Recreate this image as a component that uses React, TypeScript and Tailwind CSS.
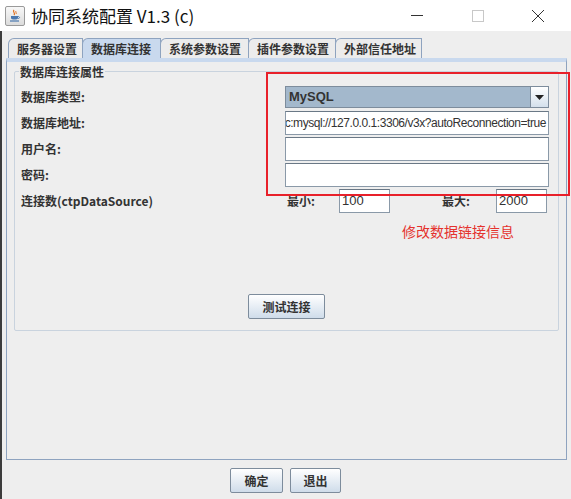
const font = "font-['Noto_Sans_CJK_SC','Noto_Sans',sans-serif]";

const tabs = [
  { label: "服务器设置", w: "w-[75px]" },
  { label: "数据库连接", w: "w-[79px]", active: true },
  { label: "系统参数设置", w: "w-[89px]" },
  { label: "插件参数设置", w: "w-[88px]" },
  { label: "外部信任地址", w: "w-[87px]" },
];

const JavaIcon = () => (
  <div className="flex h-[20px] w-[20px] items-center justify-center rounded-[2px] border border-[#9a9a9a] bg-gradient-to-b from-[#f8f8f8] to-[#dcdcdc]">
    <svg width="14" height="14" viewBox="0 0 14 14">
      <path d="M6 1 C4 3 8 4 6 6" stroke="#e07020" strokeWidth="1.2" fill="none" />
      <path d="M8 2 C7 3 9 4 8 5" stroke="#e07020" strokeWidth="1" fill="none" />
      <path d="M3 7 H10 V9 C10 11 3 11 3 9 Z" fill="#4a78b0" />
      <path d="M10 7.5 C12 7.5 12 9.5 10 9.5" stroke="#4a78b0" strokeWidth="1" fill="none" />
      <path d="M2 12 H11" stroke="#4a78b0" strokeWidth="1.2" />
    </svg>
  </div>
);

const Button = ({ label, w }: { label: string; w: string }) => (
  <button
    className={`${w} flex h-[25px] items-center justify-center rounded-[2px] border border-[#7d8c9c] bg-gradient-to-b from-[#ffffff] to-[#cfdcea] text-[12px] font-bold text-[#333]`}
  >
    {label}
  </button>
);

const Input = ({ value, w = "w-[264px]", end }: { value?: string; w?: string; end?: boolean }) => (
  <div
    className={`${w} flex h-[24px] items-center overflow-hidden whitespace-nowrap border border-[#8a99a8] border-t-[#6a7886] bg-white px-[2px] font-['Liberation_Sans',sans-serif] text-[#333] ${
      end ? "justify-end text-[12px] tracking-[-0.45px]" : "text-[13px]"
    }`}
  >
    {value}
  </div>
);

const Label = ({ children }: { children: React.ReactNode }) => (
  <div className="w-[264px] shrink-0 text-[12px] font-bold text-[#333]">{children}</div>
);

export default function App() {
  return (
    <div className={`relative h-[499px] w-[571px] overflow-hidden bg-[#eeeeee] ${font}`}>
      {/* title bar */}
      <div className="flex h-[31px] items-center bg-white pl-[5px]">
        <JavaIcon />
        <div className="ml-[6px] text-[17px] text-[#111]">协同系统配置 V1.3 (c)</div>
        <div className="ml-auto flex items-center">
          <div className="flex w-[60px] justify-center">
            <div className="h-[1px] w-[12px] bg-[#333]" />
          </div>
          <div className="flex w-[62px] justify-center">
            <div className="h-[12px] w-[12px] border border-[#c8c8c8]" />
          </div>
          <div className="flex w-[62px] justify-center pr-[4px]">
            <svg width="14" height="14" viewBox="0 0 14 14">
              <path d="M1 1 L13 13 M13 1 L1 13" stroke="#333" strokeWidth="1" />
            </svg>
          </div>
        </div>
      </div>

      {/* body */}
      <div className="flex h-[468px] flex-col border-l-2 border-[#3c3c3c] pl-[4px] pr-[4px] pt-[7px]">
        {/* tabs */}
        <div className="flex h-[20px] items-end pl-[3px]">
          {tabs.map((t) => (
            <div
              key={t.label}
              className={`${t.w} -ml-[1px] flex h-[20px] items-center rounded-tl-[6px] border border-b-0 border-[#8ea3bf] pl-[8px] text-[12px] font-bold text-[#333] ${
                t.active ? "bg-[#c9d9ee]" : "bg-[#ececec]"
              }`}
            >
              {t.label}
            </div>
          ))}
        </div>

        {/* tab panel */}
        <div className="h-[402px] border border-[#8ea3bf] border-t-[4px] border-t-[#c9d9ee] px-[7px] pt-[9px]">
          <div className="relative h-[260px] rounded-[2px] border border-[#c9d3de] px-[6px] pt-[12px]">
            <div className="absolute -top-[9px] left-[4px] bg-[#eeeeee] px-[1px] text-[12px] font-bold text-[#333]">
              数据库连接属性
            </div>

            <div className="flex flex-col">
              <div className="flex h-[26px] items-center">
                <Label>数据库类型:</Label>
                <div className="flex h-[22px] w-[264px] items-stretch border border-[#7d8c9c] bg-[#a3b8cc]">
                  <div className="flex flex-1 items-center pl-[3px] font-['Liberation_Sans',sans-serif] text-[13px] font-bold text-[#333]">
                    MySQL
                  </div>
                  <div className="flex w-[18px] items-center justify-center border-l border-[#7d8c9c] bg-gradient-to-b from-[#ffffff] to-[#d4e0ec]">
                    <svg width="9" height="5" viewBox="0 0 9 5">
                      <path d="M0 0 H9 L4.5 5 Z" fill="#222" />
                    </svg>
                  </div>
                </div>
              </div>
              <div className="flex h-[26px] items-center">
                <Label>数据库地址:</Label>
                <Input value="jdbc:mysql://127.0.0.1:3306/v3x?autoReconnection=true" end />
              </div>
              <div className="flex h-[26px] items-center">
                <Label>用户名:</Label>
                <Input />
              </div>
              <div className="flex h-[26px] items-center">
                <Label>密码:</Label>
                <Input />
              </div>
              <div className="flex h-[26px] items-center">
                <Label>连接数(ctpDataSource)</Label>
                <div className="w-[2px]" />
                <div className="w-[52px] text-[12px] font-bold text-[#333]">最小:</div>
                <Input value="100" w="w-[51px]" />
                <div className="w-[52px]" />
                <div className="w-[54px] text-[12px] font-bold text-[#333]">最大:</div>
                <Input value="2000" w="w-[51px]" />
              </div>
              <div className="mt-[7px] pl-[381px] text-[14px] text-[#e5322d]">修改数据链接信息</div>
              <div className="mt-[52px] flex justify-center">
                <Button label="测试连接" w="w-[77px]" />
              </div>
            </div>
          </div>
        </div>

        {/* bottom buttons */}
        <div className="mt-[8px] flex justify-center gap-[7px] pr-[2px]">
          <Button label="确定" w="w-[53px]" />
          <Button label="退出" w="w-[51px]" />
        </div>
      </div>

      {/* red annotation box */}
      <div className="absolute left-[266px] top-[72px] h-[124px] w-[304px] border-2 border-[#e8202a]" />
    </div>
  );
}
